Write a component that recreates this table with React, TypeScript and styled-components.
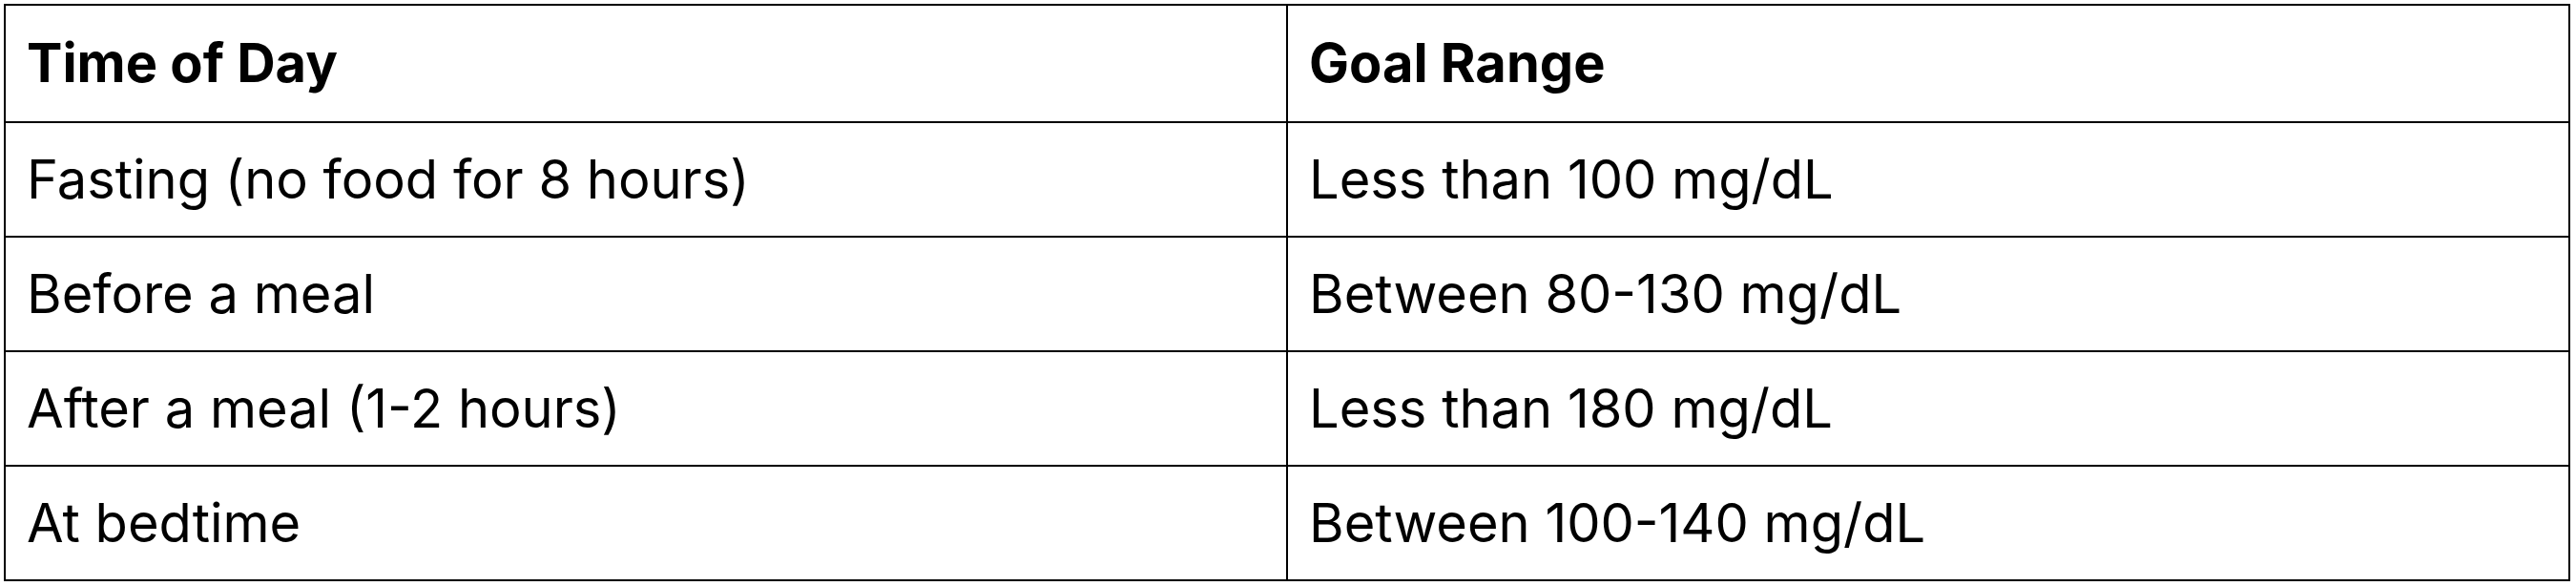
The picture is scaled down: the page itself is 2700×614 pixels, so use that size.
import React from "react";
import styled, { createGlobalStyle } from "styled-components";

const GlobalStyle = createGlobalStyle`
  html, body {
    margin: 0;
    padding: 0;
    background: #ffffff;
  }
  body {
    font-family: Inter, "Noto Sans", sans-serif;
    color: #000000;
  }
`;

const Page = styled.div`
  padding: 4px 0 0 4px;
`;

const Table = styled.table`
  width: 2690px;
  border-collapse: collapse;
  table-layout: fixed;
  border: 2px solid #000;
  font-family: Inter, "Noto Sans", sans-serif;
  font-size: 56px;
  color: #000;
`;

const HeadCell = styled.th`
  border: 2px solid #000;
  height: 120.5px;
  padding: 0 22px;
  text-align: left;
  vertical-align: middle;
  font-weight: 700;
`;

const Cell = styled.td`
  border: 2px solid #000;
  height: 118.2px;
  padding: 0 22px;
  text-align: left;
  vertical-align: middle;
  font-weight: 400;
`;

const rows: [string, string][] = [
  ["Fasting (no food for 8 hours)", "Less than 100 mg/dL"],
  ["Before a meal", "Between 80-130 mg/dL"],
  ["After a meal (1-2 hours)", "Less than 180 mg/dL"],
  ["At bedtime", "Between 100-140 mg/dL"],
];

export default function App() {
  return (
    <>
      <GlobalStyle />
      <Page>
        <Table>
          <thead>
            <tr>
              <HeadCell>Time of Day</HeadCell>
              <HeadCell>Goal Range</HeadCell>
            </tr>
          </thead>
          <tbody>
            {rows.map(([time, goal]) => (
              <tr key={time}>
                <Cell>{time}</Cell>
                <Cell>{goal}</Cell>
              </tr>
            ))}
          </tbody>
        </Table>
      </Page>
    </>
  );
}
